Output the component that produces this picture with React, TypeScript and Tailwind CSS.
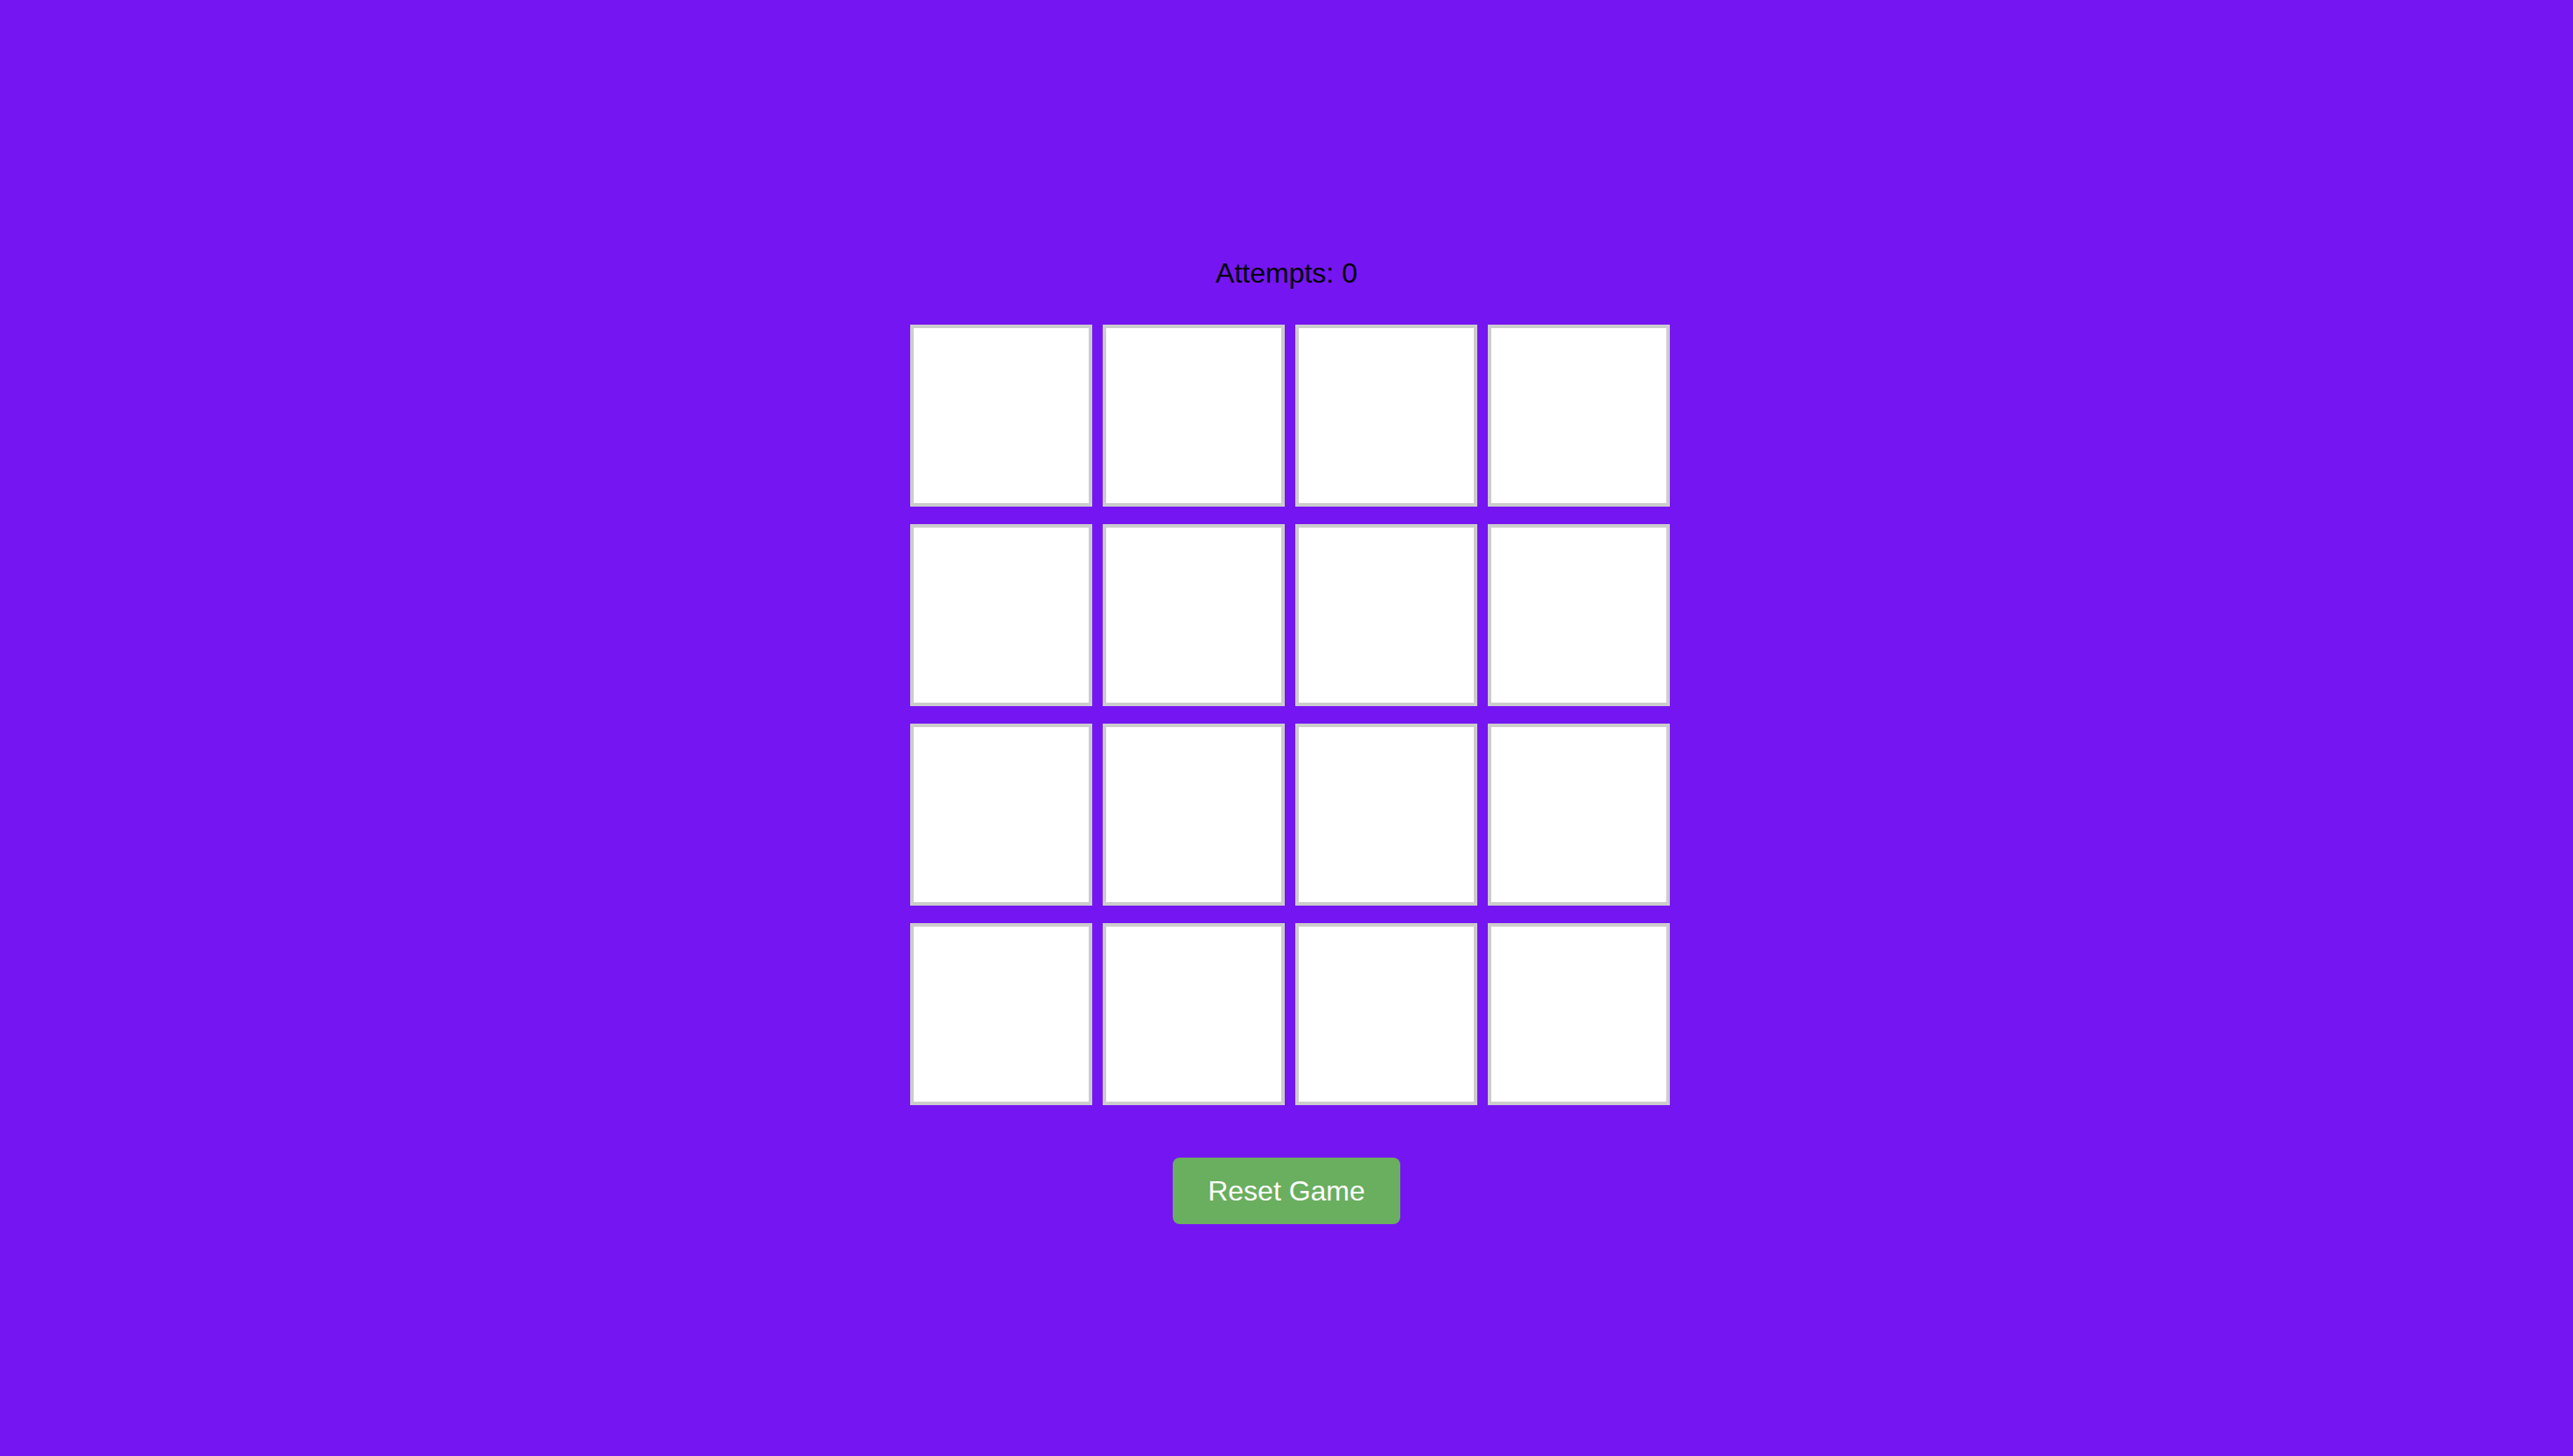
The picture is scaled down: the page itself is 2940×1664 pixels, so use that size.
import { useState } from "react";

const CARD_COUNT = 16;

function Card() {
  return (
    <div className="w-[208px] h-[208px] box-border border-4 border-[#cccccc] bg-white cursor-pointer"></div>
  );
}

function App() {
  const [attempts, setAttempts] = useState(0);

  return (
    <div
      className="w-full h-[1664px] bg-[#7516f2] flex flex-col items-center pt-[294px]"
      style={{ fontFamily: '"Liberation Sans", Arial, sans-serif' }}
    >
      <div className="text-[32px] text-black leading-[36px]">
        Attempts: {attempts}
      </div>
      <div className="mt-[41px] ml-[8px] grid grid-cols-4 gap-x-[12px] gap-y-[20px]">
        {Array.from({ length: CARD_COUNT }).map((_, i) => (
          <Card key={i} />
        ))}
      </div>
      <button
        className="mt-[60px] w-[260px] h-[76px] rounded-[8px] bg-[#6aae5f] text-white text-[32px] leading-[36px] cursor-pointer"
        onClick={() => setAttempts(0)}
      >
        Reset Game
      </button>
    </div>
  );
}

export default App;
